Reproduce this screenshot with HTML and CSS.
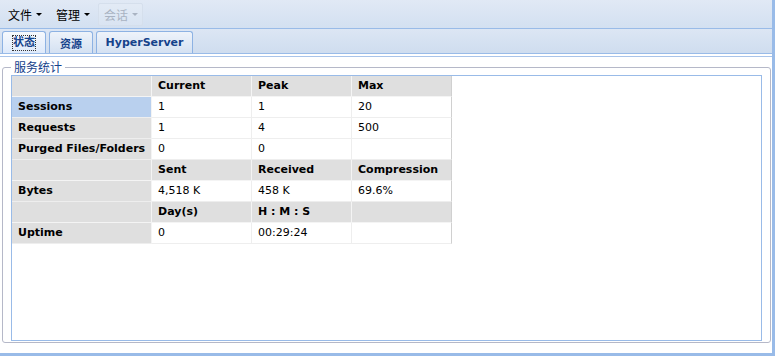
FILE: index.html
```html
<!DOCTYPE html>
<html>
<head>
<meta charset="utf-8">
<link rel="stylesheet" href="styles.css">
</head>
<body>
<div class="app">
  <div class="menubar">
    <div class="mitem"><span>文件</span><i class="arrow"></i></div>
    <div class="mitem"><span>管理</span><i class="arrow"></i></div>
    <div class="mitem disabled"><span>会话</span><i class="arrow"></i></div>
  </div>
  <div class="tabstrip">
    <div class="tab active"><span class="focus">状态</span></div>
    <div class="tab">资源</div>
    <div class="tab">HyperServer</div>
  </div>
  <div class="spacer"></div>
  <div class="body">
    <fieldset class="fs">
      <legend class="lg">服务统计</legend>
      <div class="box">
        <table class="stats">
          <tr class="hd"><td class="c1"></td><td>Current</td><td>Peak</td><td class="last">Max</td></tr>
          <tr><td class="c1 sel">Sessions</td><td>1</td><td>1</td><td class="last">20</td></tr>
          <tr><td class="c1">Requests</td><td>1</td><td>4</td><td class="last">500</td></tr>
          <tr><td class="c1">Purged Files/Folders</td><td>0</td><td>0</td><td class="last"></td></tr>
          <tr class="hd"><td class="c1"></td><td>Sent</td><td>Received</td><td class="last">Compression</td></tr>
          <tr><td class="c1">Bytes</td><td>4,518 K</td><td>458 K</td><td class="last">69.6%</td></tr>
          <tr class="hd"><td class="c1"></td><td>Day(s)</td><td>H : M : S</td><td class="last"></td></tr>
          <tr><td class="c1">Uptime</td><td>0</td><td>00:29:24</td><td class="last"></td></tr>
        </table>
      </div>
    </fieldset>
  </div>
</div>
</body>
</html>
```
FILE: styles.css
```css
html, body {
  margin: 0;
  padding: 0;
  background: #fff;
}
body {
  font-family: "DejaVu Sans", "Noto Sans CJK SC", sans-serif;
  font-size: 11px;
  color: #000;
}
.app {
  width: 772px;
  height: 353px;
  border-right: 3px solid #99bbe8;
  border-bottom: 3px solid #99bbe8;
  display: flex;
  flex-direction: column;
  overflow: hidden;
}
.menubar {
  height: 29px;
  box-sizing: border-box;
  padding: 3px 0 0 2px;
  display: flex;
  gap: 3px;
  background: linear-gradient(#e1e9f5, #d3e0f1);
  border-bottom: 1px solid #99bbe8;
}
.mitem {
  width: 45px;
  height: 23px;
  box-sizing: border-box;
  border: 1px solid transparent;
  padding: 0 0 0 5px;
  display: flex;
  align-items: center;
  font-size: 12px;
  color: #000;
}
.mitem span {
  font-family: "Noto Sans CJK SC", sans-serif;
  line-height: 14px;
}
.arrow {
  display: inline-block;
  margin-left: 4px;
  width: 0;
  height: 0;
  border-left: 3px solid transparent;
  border-right: 3px solid transparent;
  border-top: 3px solid #000;
}
.mitem.disabled {
  color: #a9b3c2;
  border-color: #d5dfec;
  background: rgba(255,255,255,0.12);
  border-radius: 2px;
}
.mitem.disabled .arrow {
  border-top-color: #a9b3c2;
}
.tabstrip {
  height: 25px;
  box-sizing: border-box;
  padding: 2px 0 0 2px;
  display: flex;
  gap: 3px;
  align-items: flex-end;
  background: linear-gradient(#dce6f4, #cfddef);
  border-bottom: 1px solid #99bbe8;
}
.tab {
  height: 22px;
  box-sizing: border-box;
  padding: 0;
  border: 1px solid #8db2e3;
  border-bottom: none;
  border-radius: 3px 3px 0 0;
  background: linear-gradient(#eef3fa, #d4e1f2);
  color: #15428b;
  font-weight: bold;
  font-size: 11px;
  display: flex;
  align-items: center;
  justify-content: center;
  font-family: "DejaVu Sans", "Noto Sans CJK SC", sans-serif;
}
.tab:nth-child(1) { width: 44px; }
.tab:nth-child(2) { width: 44px; }
.tab:nth-child(3) { width: 97px; }
.tab.active {
  background: linear-gradient(#f6f9fd, #deeafb);
}
.focus {
  outline: 1px dotted #333;
  line-height: 14px;
}
.spacer {
  height: 3px;
  box-sizing: border-box;
  background: #fff;
  border-bottom: 1px solid #a9c4ea;
}
.body {
  flex: 1;
  padding: 3px 1px 0 2px;
}
.fs {
  margin: 0;
  width: 769px;
  box-sizing: border-box;
  border: 1px solid #b5b8c8;
  border-radius: 3px;
  padding: 0 8px 1px 8px;
  height: 283px;
}
.lg {
  padding: 0 3px;
  font-size: 12px;
  line-height: 14px;
  color: #15428b;
  font-family: "Noto Sans CJK SC", sans-serif;
}
.box {
  border: 1px solid #99bbe8;
  height: 266px;
  box-sizing: border-box;
  margin-top: 1px;
}
.stats {
  border-collapse: separate;
  border-spacing: 0;
  width: 440px;
  table-layout: fixed;
}
.stats td {
  height: 20px;
  padding: 0 0 0 6px;
  border-right: 1px solid #eeeeee;
  border-bottom: 1px solid #eeeeee;
  width: 93px;
  box-sizing: content-box;
  line-height: 20px;
  white-space: nowrap;
  overflow: hidden;
  background: #fff;
}
.stats td.c1 {
  width: 133px;
  background: #dfdfdf;
  font-weight: bold;
  border-right-color: #f4f4f4;
}
.stats td.c1.sel {
  background: #b9d0ee;
}
.stats td.last {
  border-right-color: #d0d0d0;
}
.stats tr.hd td {
  background: #dfdfdf;
  font-weight: bold;
  border-bottom-color: #f4f4f4;
  border-right-color: #f4f4f4;
}
.stats tr.hd td.last {
  border-right-color: #d0d0d0;
}
```
